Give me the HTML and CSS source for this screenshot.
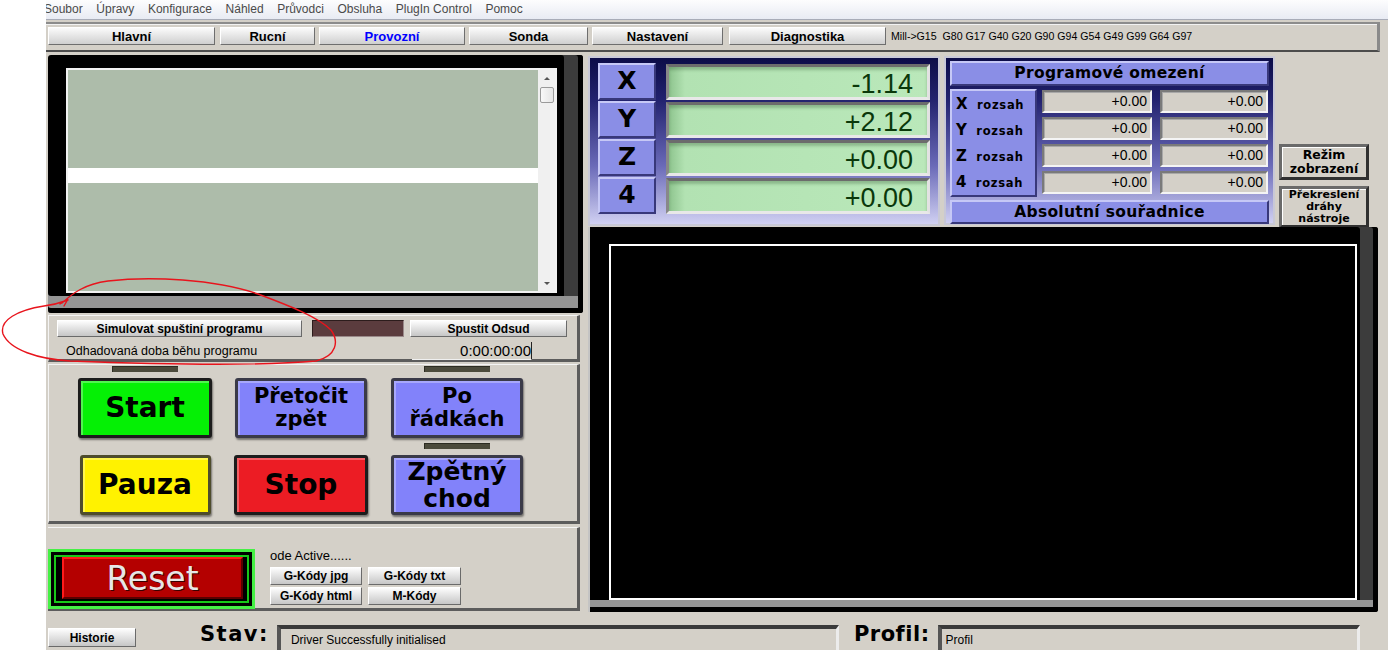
FILE: index.html
```html
<!DOCTYPE html>
<html lang="cs">
<head>
    <meta charset="UTF-8">
    <title>Mach3 - Provozní</title>
    <link rel="stylesheet" href="styles.css">
</head>
<body>
    <div class="app">
        <!-- Menu -->
        <div class="menubar">
            <span class="menu-first">Soubor</span>
            <span>Úpravy</span>
            <span>Konfigurace</span>
            <span>Náhled</span>
            <span>Průvodci</span>
            <span>Obsluha</span>
            <span>PlugIn Control</span>
            <span>Pomoc</span>
        </div>

        <!-- Screen tabs + modal codes -->
        <div class="tabbar">
            <button class="tab tab-hlavni">Hlavní</button>
            <button class="tab tab-rucni">Rucní</button>
            <button class="tab tab-provozni active">Provozní</button>
            <button class="tab tab-sonda">Sonda</button>
            <button class="tab tab-nastaveni">Nastavení</button>
            <button class="tab tab-diag">Diagnostika</button>
            <span class="modal-codes">Mill-&gt;G15 &nbsp;G80 G17 G40 G20 G90 G94 G54 G49 G99 G64 G97</span>
        </div>

        <div class="main">
            <div class="left-col">
                <!-- G-code listing -->
                <div class="code-frame">
                    <div class="code-view">
                        <div class="code-lines">
                            <div class="code-block code-top"></div>
                            <div class="code-current"></div>
                            <div class="code-block"></div>
                        </div>
                        <div class="scrollbar">
                            <span class="arrow-up"></span>
                            <span class="thumb"></span>
                            <span class="arrow-down"></span>
                        </div>
                    </div>
                </div>

                <div class="panel sim-panel">
                    <div class="sim-row">
                        <button class="flat-btn sim-btn">Simulovat spuštiní programu</button>
                        <div class="sim-led"></div>
                        <button class="flat-btn run-from-btn">Spustit Odsud</button>
                    </div>
                    <div class="sim-row sim-row-2">
                        <span class="sim-label">Odhadovaná doba běhu programu</span>
                        <span class="sim-time">0:00:00:00</span>
                    </div>
                </div>

                <!-- Cycle controls -->
                <div class="panel cycle-panel">
                    <div class="cycle-col">
                        <div class="led"></div>
                        <button class="cycle-btn btn-start">Start</button>
                        <div class="led led-none"></div>
                        <button class="cycle-btn btn-pause">Pauza</button>
                    </div>
                    <div class="cycle-col">
                        <div class="led led-none"></div>
                        <button class="cycle-btn btn-blue btn-two">Přetočit<br>zpět</button>
                        <div class="led led-none"></div>
                        <button class="cycle-btn btn-stop">Stop</button>
                    </div>
                    <div class="cycle-col">
                        <div class="led"></div>
                        <button class="cycle-btn btn-blue btn-two">Po<br>řádkách</button>
                        <div class="led"></div>
                        <button class="cycle-btn btn-blue btn-reverse">Zpětný<br>chod</button>
                    </div>
                </div>

                <div class="panel reset-panel">
                    <div class="reset-ring">
                        <div class="reset-inner">
                            <button class="reset-btn">Reset</button>
                        </div>
                    </div>
                    <div class="gcode-box">
                        <div class="mode-text">ode Active......</div>
                        <div class="gcode-grid">
                            <button class="flat-btn small-btn">G-Kódy jpg</button>
                            <button class="flat-btn small-btn">G-Kódy txt</button>
                            <button class="flat-btn small-btn">G-Kódy html</button>
                            <button class="flat-btn small-btn">M-Kódy</button>
                        </div>
                    </div>
                </div>
            </div>

            <div class="right-col">
                <div class="top-row">
                    <!-- DRO -->
                    <div class="dro">
                        <div class="dro-row">
                            <div class="axis">X</div>
                            <div class="dro-value">-1.14</div>
                        </div>
                        <div class="dro-row">
                            <div class="axis">Y</div>
                            <div class="dro-value">+2.12</div>
                        </div>
                        <div class="dro-row">
                            <div class="axis">Z</div>
                            <div class="dro-value">+0.00</div>
                        </div>
                        <div class="dro-row">
                            <div class="axis">4</div>
                            <div class="dro-value">+0.00</div>
                        </div>
                    </div>

                    <!-- Program extents -->
                    <div class="limits">
                        <div class="limits-title">Programové omezení</div>
                        <div class="limits-body">
                            <div class="limits-labels">
                                <div class="range-label"><b>X</b> rozsah</div>
                                <div class="range-label"><b>Y</b> rozsah</div>
                                <div class="range-label"><b>Z</b> rozsah</div>
                                <div class="range-label"><b>4</b> rozsah</div>
                            </div>
                            <div class="limits-grid">
                                <div class="range-field">+0.00</div>
                                <div class="range-field">+0.00</div>
                                <div class="range-field">+0.00</div>
                                <div class="range-field">+0.00</div>
                                <div class="range-field">+0.00</div>
                                <div class="range-field">+0.00</div>
                                <div class="range-field">+0.00</div>
                                <div class="range-field">+0.00</div>
                            </div>
                        </div>
                        <div class="limits-title limits-foot">Absolutní souřadnice</div>
                    </div>

                    <div class="side-btns">
                        <button class="side-btn">Režim<br>zobrazení</button>
                        <button class="side-btn side-btn-small">Překreslení<br>dráhy<br>nástroje</button>
                    </div>
                </div>

                <!-- Toolpath view -->
                <div class="toolpath-frame">
                    <div class="toolpath"></div>
                </div>
            </div>
        </div>

        <div class="statusbar">
            <button class="flat-btn history-btn">Historie</button>
            <span class="status-label">Stav:</span>
            <div class="status-field">Driver Successfully initialised</div>
            <span class="status-label profile-label">Profil:</span>
            <div class="status-field profile-field">Profil</div>
        </div>
    </div>

    <!-- hand-drawn marker loop -->
    <svg class="scribble" width="1388" height="650" viewBox="0 0 1388 650">
        <path d="M62 303 C72 294 84 284 108 281 C150 276 215 279 258 294 C290 306 318 317 331 330 C339 341 337 356 316 361 C260 366 150 364 70 361 C38 359 10 350 3 334 C-1 320 18 310 44 306 C52 305 60 303 68 300 M60 304 L68 299 L64 306"/>
    </svg>
</body>
</html>
```

FILE: styles.css
```css
* {
    box-sizing: border-box;
}

body {
    margin: 0;
    width: 1388px;
    height: 650px;
    overflow: hidden;
    position: relative;
    background: #fff;
    font-family: "Liberation Sans", Arial, sans-serif;
    font-size: 12px;
    color: #000;
}

button {
    font-family: inherit;
    color: #000;
    padding: 0;
    cursor: pointer;
}

.app {
    margin-left: 46px;
    width: 1342px;
    height: 650px;
    background: #d4d0c8;
    overflow: hidden;
    display: flex;
    flex-direction: column;
}

/* menu */
.menubar {
    height: 20px;
    display: flex;
    align-items: center;
    gap: 13.6px;
    padding-bottom: 2px;
    background: linear-gradient(#fdfdfe, #e8ebf3);
    border-bottom: 1px solid #a8acb8;
    color: #4a4a4a;
    font-size: 12px;
}

.menu-first {
    margin-left: -2px;
}

/* tabs */
.tabbar {
    margin-top: 2px;
    width: 1334px;
    height: 30px;
    display: flex;
    align-items: center;
    padding-left: 2px;
    padding-bottom: 2px;
    background: #d4d0c8;
    border-top: 2px solid #8c8c8c;
    border-bottom: 2px solid #4c4c4c;
    border-right: 3px solid #8a8a8a;
    box-shadow: inset 0 1px 0 #f2f2f2;
}

.tab {
    height: 18px;
    font-size: 13px;
    font-weight: bold;
    background: linear-gradient(#fbfbfb, #cfcfcf);
    border: 1px solid;
    border-color: #fff #6e6e6e #6e6e6e #fff;
}

.tab.active {
    color: #0000ff;
}

.tab-hlavni { width: 167px; }
.tab-rucni { width: 95px; margin-left: 5px; }
.tab-provozni { width: 146px; margin-left: 4px; }
.tab-sonda { width: 119px; margin-left: 4px; }
.tab-nastaveni { width: 131px; margin-left: 4px; }
.tab-diag { width: 157px; margin-left: 6px; }

.modal-codes {
    margin-left: 5px;
    font-size: 10.6px;
    white-space: pre;
}

/* layout */
.main {
    margin-top: 3px;
    height: 557px;
    display: flex;
    gap: 5px;
    padding-left: 2px;
}

.left-col {
    width: 535px;
    display: flex;
    flex-direction: column;
}

.right-col {
    width: 792px;
    display: flex;
    flex-direction: column;
}

.panel {
    background: #d4d0c8;
    border-top: 1px solid #f4f4f4;
    border-left: 1px solid #f4f4f4;
    border-right: 3px solid #5c5c5c;
    border-bottom: 3px solid #5c5c5c;
    width: 532px;
}

/* code listing */
.code-frame {
    height: 258px;
    background: #000;
    border-radius: 3px;
    padding: 13px 26px 20px 18px;
    box-shadow: inset 0 -5px 0 #000, inset -5px 0 0 #000, inset 0 -17px 0 #959595, inset -19px 0 0 #3c3c3c;
}

.code-view {
    height: 225px;
    display: flex;
    border: 2px solid #f2f2f2;
    background: #adbcaa;
}

.code-lines {
    flex: 1;
    display: flex;
    flex-direction: column;
}

.code-block {
    flex: 1;
    background: #adbcaa;
}

.code-top {
    flex: 0 0 98px;
}

.code-current {
    height: 15px;
    background: #fff;
}

.scrollbar {
    width: 17px;
    background: #f0f0f0;
    display: flex;
    flex-direction: column;
    align-items: center;
    padding-top: 7px;
}

.arrow-up,
.arrow-down {
    width: 0;
    height: 0;
    border-left: 3px solid transparent;
    border-right: 3px solid transparent;
}

.arrow-up {
    border-bottom: 3px solid #555;
}

.arrow-down {
    border-top: 3px solid #555;
    margin-top: auto;
    margin-bottom: 6px;
}

.thumb {
    width: 14px;
    height: 16px;
    margin-top: 7px;
    background: linear-gradient(to right, #f8f8f8, #e4e4e4);
    border: 1px solid #9a9a9a;
    border-radius: 2px;
}

/* simulation */
.sim-panel {
    margin-top: 2px;
    height: 47px;
    padding: 4px 0 0 8px;
}

.sim-row {
    display: flex;
    align-items: center;
}

.sim-row-2 {
    margin-top: 5px;
}

.flat-btn {
    height: 17px;
    font-size: 12px;
    font-weight: bold;
    background: linear-gradient(#fdfdfd, #c6c6c6);
    border: 1px solid;
    border-color: #fff #6a6a6a #6a6a6a #fff;
}

.sim-btn {
    width: 245px;
}

.sim-led {
    width: 92px;
    height: 17px;
    margin-left: 10px;
    background: #5b3c3e;
    border: 1px solid;
    border-color: #2c1c1c #9a8a8a #9a8a8a #2c1c1c;
}

.run-from-btn {
    width: 157px;
    margin-left: 6px;
}

.sim-label {
    width: 355px;
    padding-left: 9px;
    font-size: 12.5px;
}

.sim-time {
    width: 120px;
    height: 18px;
    text-align: right;
    font-size: 15px;
    line-height: 17px;
    border-bottom: 1px solid #f0f0f0;
    border-right: 1px solid #222;
}

/* cycle buttons */
.cycle-panel {
    margin-top: 2px;
    height: 160px;
    display: flex;
    gap: 20px;
    padding-left: 28px;
}

.cycle-col {
    width: 136px;
    display: flex;
    flex-direction: column;
    align-items: center;
}

.led {
    width: 66px;
    height: 6px;
    margin-top: 1px;
    background: #4c4b3c;
    border-top: 1px solid #2c2c22;
    border-left: 1px solid #2c2c22;
}

.cycle-col .led:nth-child(3) {
    margin-top: 5px;
}

.led-none {
    visibility: hidden;
}

.cycle-btn {
    width: 134px;
    height: 60px;
    margin-top: 6px;
    font-family: "DejaVu Sans", sans-serif;
    font-weight: bold;
    font-size: 28px;
    line-height: 1;
    border: 3px solid #1c1c1c;
    border-radius: 3px;
    box-shadow: 1px 2px 2px rgba(0, 0, 0, 0.45), inset 2px 2px 0 rgba(255, 255, 255, 0.3);
}

.btn-start {
    background: #05f005;
}

.btn-pause {
    width: 131px;
    background: #fff200;
    border-color: #4e4c2c;
}

.btn-stop {
    background: #ec1c24;
}

.btn-blue {
    background: #8282fa;
    border-color: #3a3a48;
    width: 132px;
}

.btn-two {
    font-size: 21px;
    line-height: 23px;
}

.btn-reverse {
    font-size: 25px;
    line-height: 27px;
}

/* reset */
.reset-panel {
    margin-top: 3px;
    height: 84px;
    display: flex;
    align-items: flex-start;
    padding-top: 21px;
    border-left: none;
}

.reset-ring {
    width: 207px;
    height: 60px;
    background: #000;
    border: 3px solid #45f045;
    padding: 3px;
}

.reset-inner {
    height: 100%;
    border: 2px solid #18c818;
    padding: 0 4px 2px 6px;
}

.reset-btn {
    width: 100%;
    height: 100%;
    background: #b40000;
    border: 2px solid;
    border-color: #ff1a1a #5a0000 #5a0000 #ff1a1a;
    color: #e6e6e6;
    font-family: "DejaVu Sans", sans-serif;
    font-size: 33px;
    line-height: 1;
    text-shadow: 1px 1px 0 #3a0000;
}

.gcode-box {
    margin-left: 15px;
    margin-top: -1px;
}

.mode-text {
    font-size: 13px;
    height: 19px;
}

.gcode-grid {
    display: grid;
    grid-template-columns: 92px 93px;
    column-gap: 6px;
    row-gap: 2px;
}

.small-btn {
    height: 18px;
}

/* DRO */
.top-row {
    height: 173px;
    display: flex;
}

.dro {
    width: 352px;
    height: 170px;
    margin-top: 1px;
    padding: 5px 8px 0 8px;
    border: 2px solid #c8c8d6;
    background: linear-gradient(#0c0c48, #22226e 25%, #6a6ab8 65%, #d0d0f2);
    display: flex;
    flex-direction: column;
    gap: 1px;
}

.dro-row {
    display: flex;
    gap: 10px;
    height: 37px;
}

.axis {
    width: 58px;
    height: 37px;
    background: #8a8ee6;
    border: 2px solid;
    border-color: #c6c8f6 #38387a #38387a #c6c8f6;
    font-family: "DejaVu Sans", sans-serif;
    font-weight: bold;
    font-size: 25px;
    line-height: 32px;
    text-align: center;
}

.dro-value {
    width: 264px;
    height: 36px;
    margin-top: 1px;
    border: 3px solid;
    border-color: #6c6c6c #e2e2e2 #e8e8e8 #888;
    background: linear-gradient(to right, #8ec48e, #b2e2b2 16px, #bae8ba);
    box-shadow: inset 0 3px 3px rgba(60, 100, 60, 0.35);
    color: #0a380a;
    font-size: 27px;
    line-height: 34px;
    text-align: right;
    padding-right: 14px;
}

/* program extents */
.limits {
    width: 331px;
    height: 169px;
    margin-top: 1px;
    margin-left: 4px;
    padding: 3px 4px 0 4px;
    border: 2px solid #c8c8d6;
    background: linear-gradient(#0c0c48, #22226e 25%, #6a6ab8 65%, #d0d0f2);
}

.limits-title {
    height: 25px;
    background: #8a8ee6;
    border: 2px solid;
    border-color: #c6c8f6 #38387a #38387a #c6c8f6;
    font-family: "DejaVu Sans", sans-serif;
    font-weight: bold;
    font-size: 15.5px;
    line-height: 21px;
    text-align: center;
    letter-spacing: 0.3px;
}

.limits-body {
    display: flex;
    margin-top: 3px;
    height: 108px;
}

.limits-labels {
    width: 87px;
    background: #8a8ee6;
    border: 2px solid;
    border-color: #c6c8f6 #38387a #38387a #c6c8f6;
    display: flex;
    flex-direction: column;
    justify-content: space-around;
    padding-left: 4px;
}

.range-label {
    font-family: "DejaVu Sans", sans-serif;
    font-weight: bold;
    font-size: 11.5px;
    letter-spacing: 0.7px;
}

.range-label b {
    font-size: 15px;
    margin-right: 4px;
}

.limits-grid {
    margin-left: 5px;
    display: grid;
    grid-template-columns: 110px 108px;
    grid-auto-rows: 23px;
    column-gap: 8px;
    row-gap: 4px;
    padding-top: 1px;
}

.range-field {
    background: #d4d0c8;
    border: 2px solid;
    border-color: #7a7a7a #f4f4f4 #f4f4f4 #7a7a7a;
    box-shadow: inset 1px 1px 0 #a8a8a8;
    font-size: 14px;
    line-height: 19px;
    text-align: right;
    padding-right: 3px;
}

.limits-foot {
    margin-top: 3px;
    height: 24px;
}

.side-btns {
    margin-left: 4px;
    width: 90px;
    display: flex;
    flex-direction: column;
    justify-content: flex-end;
    gap: 6px;
    padding-bottom: 0;
}

.side-btn {
    height: 36px;
    background: #d4d0c8;
    border: 3px solid;
    border-color: #6a6a6a #303030 #303030 #6a6a6a;
    font-family: "DejaVu Sans", sans-serif;
    font-weight: bold;
    font-size: 12.5px;
    line-height: 14px;
    box-shadow: inset 1px 1px 0 #fff;
}

.side-btn-small {
    height: 42px;
    font-size: 11px;
    line-height: 12px;
}

/* toolpath */
.toolpath-frame {
    margin-top: -1px;
    width: 790px;
    height: 385px;
    background: #000;
    border-left: 2px solid #c4c4c4;
    border-radius: 0 3px 3px 0;
    padding: 17px 21px 12px 19px;
    box-shadow: inset 0 -5px 0 #000, inset -5px 0 0 #000, inset 0 -12px 0 #959595, inset -18px 0 0 #3c3c3c;
}

.toolpath {
    height: 100%;
    background: #000;
    border: 2px solid #fff;
}

/* status bar */
.statusbar {
    margin-top: 3px;
    height: 35px;
    display: flex;
    align-items: flex-start;
    padding-left: 2px;
}

.history-btn {
    width: 88px;
    height: 19px;
    margin-top: 13px;
}

.status-label {
    margin-top: 7px;
    margin-left: 64px;
    font-family: "DejaVu Sans", sans-serif;
    font-weight: bold;
    font-size: 21px;
    letter-spacing: 1.5px;
}

.status-field {
    width: 562px;
    height: 30px;
    margin-top: 10px;
    margin-left: 8px;
    padding: 4px 0 0 10px;
    background: #d4d0c8;
    border-top: 4px solid #3a3a3a;
    border-left: 4px solid #555;
    border-right: 3px solid #ececec;
    font-size: 12px;
}

.profile-label {
    margin-left: 15px;
    letter-spacing: 0.5px;
}

.profile-field {
    width: 422px;
    margin-left: 8px;
    padding-left: 4px;
}

.scribble {
    position: absolute;
    left: 0;
    top: 0;
    pointer-events: none;
}

.scribble path {
    fill: none;
    stroke: #e8141c;
    stroke-width: 1.4;
    stroke-linecap: round;
}
```
